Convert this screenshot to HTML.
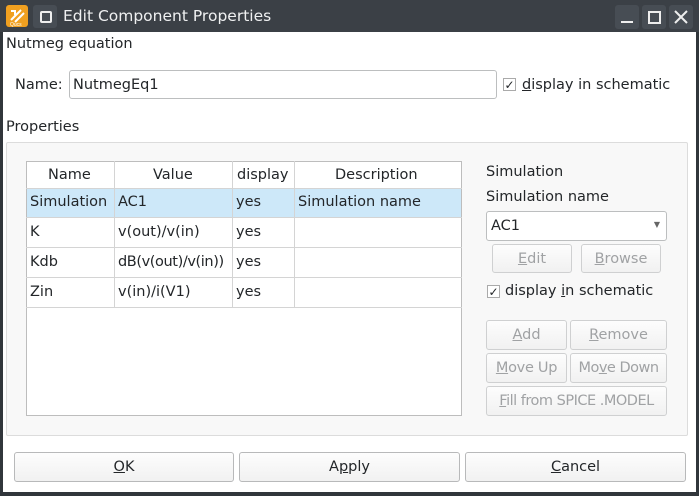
<!DOCTYPE html><html><head><style>
body{margin:0;width:699px;height:496px;overflow:hidden;background:#31363b;font-family:"DejaVu Sans","Liberation Sans",sans-serif;font-size:14.5px;color:#232629;position:relative}
.a{position:absolute}
.win{left:3px;top:32px;width:693px;height:460px;background:#fff}
.btn{position:absolute;border:1px solid #b8b9ba;border-radius:3px;background:linear-gradient(#fdfdfd,#f1f1f1);text-align:center;box-sizing:border-box;white-space:nowrap}
.dis{color:#a0a2a4;border-color:#cfd0d1}
.cell{position:absolute;white-space:nowrap}
u{text-decoration:underline}
</style></head><body>
<div class="a" style="left:0;top:0;width:699px;height:32px;background:#3b4046"></div>
<div class="a" style="left:6px;top:5px;width:22px;height:22px;background:#f0a020;border-radius:3px"><svg width="22" height="22"><path d="M5 15 L15 5 M9 17 L18 8 M5 6 h4 v4" stroke="#fff" stroke-width="2" fill="none"/><text x="4" y="21" font-size="5" fill="#fff" font-family="Liberation Sans">Qucs</text></svg></div>
<div class="a" style="left:33px;top:5px;width:24px;height:23px;background:#474d54;border-radius:3px"><div class="a" style="left:7px;top:6px;width:8px;height:8px;border:2px solid #eee;border-radius:2px"></div></div>
<div class="a" style="left:63px;top:7px;color:#eff0f1;font-size:15.5px">Edit Component Properties</div>
<div class="a" style="left:615px;top:5px;width:24px;height:24px;background:#474d54;border-radius:3px"><div class="a" style="left:6px;top:16px;width:12px;height:2px;background:#eee"></div></div>
<div class="a" style="left:642px;top:5px;width:24px;height:24px;background:#474d54;border-radius:3px"><div class="a" style="left:6px;top:6px;width:9px;height:9px;border:2px solid #eee"></div></div>
<div class="a" style="left:669px;top:5px;width:24px;height:24px;background:#474d54;border-radius:3px"><svg width="24" height="24"><path d="M6 6L18 18M18 6L6 18" stroke="#eee" stroke-width="2"/></svg></div>
<div class="a win"></div>
<div class="a" style="left:6px;top:36px">Nutmeg equation</div>
<div class="a" style="left:15px;top:77px">Name:</div>
<div class="a" style="left:69px;top:70px;width:428px;height:29px;border:1px solid #bcbebf;border-radius:3px;box-sizing:border-box;padding:6px 0 0 3px">NutmegEq1</div>
<div class="a" style="left:503px;top:78px;width:13px;height:13px;border:1px solid #aaa;box-sizing:border-box;font-size:12px;line-height:12px;text-align:center">✓</div>
<div class="a" style="left:522px;top:77px"><u>d</u>isplay in schematic</div>
<div class="a" style="left:6px;top:119px">Properties</div>
<div class="a" style="left:6px;top:142px;width:682px;height:294px;background:#f8f8f8;border:1px solid #dcdcdc;box-sizing:border-box;border-radius:2px"></div>
<div class="a" style="left:26px;top:161px;width:436px;height:255px;background:#fff;border:1px solid #bdbdbd;box-sizing:border-box"></div>
<div class="a" style="left:27px;top:188px;width:434px;height:29px;background:#cde8f9"></div>
<svg class="a" style="left:26px;top:161px" width="436" height="147"><g stroke="#d4d4d4" fill="none"><path d="M0 27.5H436M0 56.5H436M0 86.5H436M0 116.5H436M0 146.5H436M88.5 0V147M206.5 0V147M268.5 0V147"/></g></svg>
<div class="cell" style="left:48px;top:167px">Name</div><div class="cell" style="left:153px;top:167px">Value</div><div class="cell" style="left:237px;top:167px">display</div><div class="cell" style="left:335px;top:167px">Description</div>
<div class="cell" style="left:30px;top:194px">Simulation</div><div class="cell" style="left:118px;top:194px">AC1</div><div class="cell" style="left:236px;top:194px">yes</div><div class="cell" style="left:298px;top:194px">Simulation name</div>
<div class="cell" style="left:30px;top:224px">K</div><div class="cell" style="left:118px;top:224px">v(out)/v(in)</div><div class="cell" style="left:236px;top:224px">yes</div>
<div class="cell" style="left:30px;top:254px">Kdb</div><div class="cell" style="left:118px;top:254px;letter-spacing:-0.4px">dB(v(out)/v(in))</div><div class="cell" style="left:236px;top:254px">yes</div>
<div class="cell" style="left:30px;top:284px">Zin</div><div class="cell" style="left:118px;top:284px">v(in)/i(V1)</div><div class="cell" style="left:236px;top:284px">yes</div>
<div class="a" style="left:486px;top:164px">Simulation</div>
<div class="a" style="left:486px;top:189px">Simulation name</div>
<div class="a" style="left:486px;top:211px;width:181px;height:30px;border:1px solid #bcbebf;border-radius:3px;background:#fff;box-sizing:border-box;padding:6px 0 0 4px">AC1<span class="a" style="right:6px;top:8px;font-size:8px;color:#666">▼</span></div>
<div class="btn dis" style="left:492px;top:244px;width:80px;height:29px;padding-top:6px"><u>E</u>dit</div>
<div class="btn dis" style="left:581px;top:244px;width:80px;height:29px;padding-top:6px"><u>B</u>rowse</div>
<div class="a" style="left:487px;top:285px;width:13px;height:13px;border:1px solid #aaa;box-sizing:border-box;font-size:12px;line-height:12px;text-align:center;background:#fff">✓</div>
<div class="a" style="left:505px;top:283px">display <u>i</u>n schematic</div>
<div class="btn dis" style="left:486px;top:320px;width:81px;height:30px;padding-top:6px"><u>A</u>dd</div>
<div class="btn dis" style="left:570px;top:320px;width:97px;height:30px;padding-top:6px"><u>R</u>emove</div>
<div class="btn dis" style="left:486px;top:353px;width:81px;height:30px;padding-top:6px;letter-spacing:-0.3px"><u>M</u>ove Up</div>
<div class="btn dis" style="left:570px;top:353px;width:97px;height:30px;padding-top:6px;letter-spacing:-0.5px">Mo<u>v</u>e Down</div>
<div class="btn dis" style="left:486px;top:386px;width:181px;height:30px;padding-top:6px;letter-spacing:-0.5px"><u>F</u>ill from SPICE .MODEL</div>
<div class="btn" style="left:14px;top:452px;width:220px;height:30px;padding-top:6px"><u>O</u>K</div>
<div class="btn" style="left:239px;top:452px;width:221px;height:30px;padding-top:6px">A<u>p</u>ply</div>
<div class="btn" style="left:465px;top:452px;width:221px;height:30px;padding-top:6px"><u>C</u>ancel</div>
</body></html>
